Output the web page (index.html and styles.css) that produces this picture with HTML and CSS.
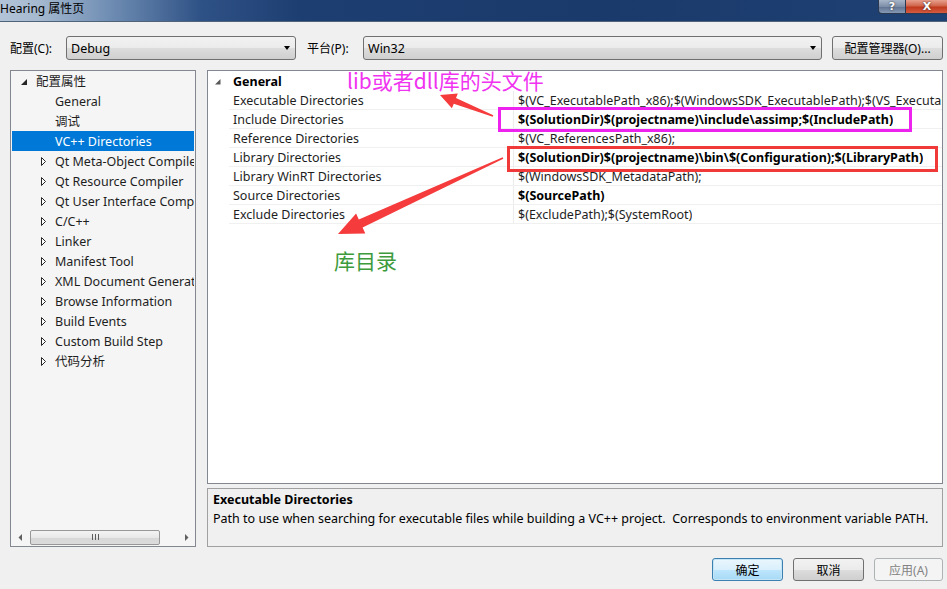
FILE: index.html
```html
<!DOCTYPE html>
<html lang="zh-CN">
<head>
<meta charset="utf-8">
<title>Hearing 属性页</title>
<link rel="stylesheet" href="styles.css">
</head>
<body>
<div class="window">
  <div class="titlebar">
    <span class="title">Hearing 属性页</span>
    <div class="caption">
      <div class="cap-btn help">?</div>
      <div class="cap-btn close">X</div>
    </div>
  </div>
  <div class="content">
    <div class="config-row">
      <span class="lbl">配置(C):</span>
      <div class="combo combo-config"><span class="combo-text">Debug</span><i class="drop"></i></div>
      <span class="lbl lbl-plat">平台(P):</span>
      <div class="combo combo-plat"><span class="combo-text">Win32</span><i class="drop"></i></div>
      <div class="btn btn-mgr">配置管理器(O)...</div>
    </div>
    <div class="main">
      <div class="tree">
        <ul class="tree-list">
          <li class="node lvl0"><span class="twisty"><svg width="7" height="7" viewBox="0 0 7 7"><polygon points="6,0 6,6 0,6" fill="#262626"/></svg></span>配置属性</li>
          <li class="node lvl1"><span class="twisty"></span>General</li>
          <li class="node lvl1"><span class="twisty"></span>调试</li>
          <li class="node lvl1 selected"><span class="twisty"></span>VC++ Directories</li>
          <li class="node lvl1"><span class="twisty"><svg class="tri" width="6" height="9" viewBox="0 0 6 9"><polygon points="0.5,0.5 4.5,4.5 0.5,8.5" fill="#fff" stroke="#262626"/></svg></span>Qt Meta-Object Compiler</li>
          <li class="node lvl1"><span class="twisty"><svg class="tri" width="6" height="9" viewBox="0 0 6 9"><polygon points="0.5,0.5 4.5,4.5 0.5,8.5" fill="#fff" stroke="#262626"/></svg></span>Qt Resource Compiler</li>
          <li class="node lvl1"><span class="twisty"><svg class="tri" width="6" height="9" viewBox="0 0 6 9"><polygon points="0.5,0.5 4.5,4.5 0.5,8.5" fill="#fff" stroke="#262626"/></svg></span>Qt User Interface Compiler</li>
          <li class="node lvl1"><span class="twisty"><svg class="tri" width="6" height="9" viewBox="0 0 6 9"><polygon points="0.5,0.5 4.5,4.5 0.5,8.5" fill="#fff" stroke="#262626"/></svg></span>C/C++</li>
          <li class="node lvl1"><span class="twisty"><svg class="tri" width="6" height="9" viewBox="0 0 6 9"><polygon points="0.5,0.5 4.5,4.5 0.5,8.5" fill="#fff" stroke="#262626"/></svg></span>Linker</li>
          <li class="node lvl1"><span class="twisty"><svg class="tri" width="6" height="9" viewBox="0 0 6 9"><polygon points="0.5,0.5 4.5,4.5 0.5,8.5" fill="#fff" stroke="#262626"/></svg></span>Manifest Tool</li>
          <li class="node lvl1"><span class="twisty"><svg class="tri" width="6" height="9" viewBox="0 0 6 9"><polygon points="0.5,0.5 4.5,4.5 0.5,8.5" fill="#fff" stroke="#262626"/></svg></span>XML Document Generator</li>
          <li class="node lvl1"><span class="twisty"><svg class="tri" width="6" height="9" viewBox="0 0 6 9"><polygon points="0.5,0.5 4.5,4.5 0.5,8.5" fill="#fff" stroke="#262626"/></svg></span>Browse Information</li>
          <li class="node lvl1"><span class="twisty"><svg class="tri" width="6" height="9" viewBox="0 0 6 9"><polygon points="0.5,0.5 4.5,4.5 0.5,8.5" fill="#fff" stroke="#262626"/></svg></span>Build Events</li>
          <li class="node lvl1"><span class="twisty"><svg class="tri" width="6" height="9" viewBox="0 0 6 9"><polygon points="0.5,0.5 4.5,4.5 0.5,8.5" fill="#fff" stroke="#262626"/></svg></span>Custom Build Step</li>
          <li class="node lvl1"><span class="twisty"><svg class="tri" width="6" height="9" viewBox="0 0 6 9"><polygon points="0.5,0.5 4.5,4.5 0.5,8.5" fill="#fff" stroke="#262626"/></svg></span>代码分析</li>
        </ul>
        <div class="hscroll">
          <span class="sb-arrow"><svg width="4" height="7" viewBox="0 0 4 7"><polygon points="4,0 4,7 0.5,3.5" fill="#606060"/></svg></span>
          <div class="sb-track">
            <div class="sb-thumb"><span class="grip"></span><span class="grip"></span><span class="grip"></span></div>
          </div>
          <span class="sb-arrow"><svg width="4" height="7" viewBox="0 0 4 7"><polygon points="0,0 0,7 3.5,3.5" fill="#606060"/></svg></span>
        </div>
      </div>
      <div class="right">
        <div class="grid">
          <div class="grid-cat"><span class="cat-twisty"><svg width="6" height="6" viewBox="0 0 6 6"><polygon points="5.5,0 5.5,5.5 0,5.5" fill="#595959"/></svg></span><b>General</b></div>
          <div class="grid-row"><div class="name">Executable Directories</div><div class="val">$(VC_ExecutablePath_x86);$(WindowsSDK_ExecutablePath);$(VS_ExecutablePath);$(MSBuild_ExecutablePath);$(SystemRoot)\SysWow64;$(FxCopDir);$(PATH);</div></div>
          <div class="grid-row"><div class="name">Include Directories</div><div class="val bold">$(SolutionDir)$(projectname)\include\assimp;$(IncludePath)</div></div>
          <div class="grid-row"><div class="name">Reference Directories</div><div class="val">$(VC_ReferencesPath_x86);</div></div>
          <div class="grid-row"><div class="name">Library Directories</div><div class="val bold">$(SolutionDir)$(projectname)\bin\$(Configuration);$(LibraryPath)</div></div>
          <div class="grid-row"><div class="name">Library WinRT Directories</div><div class="val">$(WindowsSDK_MetadataPath);</div></div>
          <div class="grid-row"><div class="name">Source Directories</div><div class="val bold">$(SourcePath)</div></div>
          <div class="grid-row"><div class="name">Exclude Directories</div><div class="val">$(ExcludePath);$(SystemRoot)</div></div>
        </div>
        <div class="desc">
          <div class="desc-title">Executable Directories</div>
          <div class="desc-text">Path to use when searching for executable files while building a VC++ project.&nbsp; Corresponds to environment variable PATH.</div>
        </div>
      </div>
    </div>
    <div class="footer">
      <div class="btn btn-dlg btn-default">确定</div>
      <div class="btn btn-dlg">取消</div>
      <div class="btn btn-dlg btn-disabled">应用(A)</div>
    </div>
  </div>

  <div class="note note-lib">lib或者dll库的头文件</div>
  <div class="note note-dir">库目录</div>
  <div class="hl hl-include"></div>
  <div class="hl hl-lib"></div>
  <svg class="arrows" width="947" height="589" viewBox="0 0 947 589">
    <polygon points="440,95 457.8,93.5 456,98.1 493.3,115.3 492.7,116.7 453.8,103.7 451.9,108.3" fill="#f53b3b"/>
    <polygon points="338,234 365.3,233.5 362.6,227.6 503.3,158.7 502.7,157.3 358.8,219.5 356.1,213.6" fill="#f53b3b"/>
  </svg>
</div>
</body>
</html>
```
FILE: styles.css
```css
* { box-sizing: border-box; }
html, body { margin: 0; padding: 0; }
body {
  width: 947px;
  height: 589px;
  overflow: hidden;
  background: #f0f0f0;
  font-family: "Segoe UI", "Noto Sans", "Noto Sans CJK SC", sans-serif;
  font-size: 12.5px;
  color: #000;
}
.window { position: relative; width: 947px; height: 589px; overflow: hidden; }

/* title bar */
.titlebar {
  height: 22px;
  border-bottom: 1px solid #4f6379;
  background: linear-gradient(to right, #b3c4d8 0px, #a4b8cf 40px, #6f8db3 110px, #2f5286 200px, #1d3e71 300px, #1a3a6b 600px, #1e4173 100%);
  display: flex;
  justify-content: space-between;
  align-items: flex-start;
}
.title { font-size: 12px; line-height: 18px; color: #000; }
.caption { display: flex; margin-right: -2px; }
.cap-btn {
  height: 14px;
  color: #fff;
  font-weight: bold;
  font-size: 11px;
  line-height: 13px;
  text-align: center;
  border: 1px solid #2a3950;
  border-top: none;
  font-family: "DejaVu Sans", sans-serif;
  text-shadow: 0 0 2px #222;
}
.help {
  width: 28px;
  border-bottom-left-radius: 4px;
  background: linear-gradient(#a8b6c9, #7d8ea8 50%, #5f7290 51%, #8599b5);
}
.close {
  width: 43px;
  border-left: none;
  background: linear-gradient(#e8a08e, #d0654b 45%, #c0391d 55%, #d65b40);
}

/* content */
.content { padding: 14px 4px 0 10px; }
.config-row { display: flex; align-items: center; height: 24px; font-size: 12px; }
.lbl { width: 56px; }
.lbl-plat { margin-left: 11px; }
.combo {
  height: 24px;
  border: 1px solid #707070;
  border-radius: 3px;
  background: linear-gradient(#f2f2f2 0%, #ebebeb 50%, #dddddd 51%, #cfcfcf 100%);
  display: flex;
  align-items: center;
  justify-content: space-between;
  padding: 0 4px 0 4px;
  font-size: 12.5px;
}
.combo-config { width: 230px; }
.combo-plat { width: 459px; }
.drop {
  width: 0; height: 0;
  border-left: 3.5px solid transparent;
  border-right: 3.5px solid transparent;
  border-top: 4px solid #000;
  margin-right: 1px;
}
.btn {
  display: flex;
  align-items: center;
  justify-content: center;
  border: 1px solid #707070;
  border-radius: 3px;
  background: linear-gradient(#f2f2f2 0%, #ebebeb 50%, #dddddd 51%, #cfcfcf 100%);
  color: #000;
}
.btn-mgr { width: 111px; height: 24px; margin-left: 10px; }

/* main area */
.main { display: flex; height: 477px; margin-top: 10px; }
.tree {
  width: 186px;
  border: 1px solid #828790;
  background: #f5f5f5;
  display: flex;
  flex-direction: column;
  margin-right: 11px;
}
.tree-list {
  list-style: none;
  margin: 0;
  padding: 0;
  flex: 1;
  overflow: hidden;
}
.node {
  height: 20px;
  padding-top: 2px;
  line-height: 18px;
  white-space: nowrap;
  display: flex;
  align-items: center;
  color: #1e1e1e;
  overflow: hidden;
  margin: 0 1px;
}
.lvl0 { padding-left: 6px; }
.lvl1 { padding-left: 25px; }
.twisty { width: 18px; flex: none; display: flex; align-items: center; }
.lvl0 .twisty svg { margin-left: 3px; }
.twisty .tri { margin-left: 4px; margin-top: -1px; }
.selected { background: #0078d7; color: #fff; }

.hscroll {
  height: 17px;
  display: flex;
  align-items: center;
  padding-bottom: 1px;
}
.sb-arrow { width: 17px; display: flex; justify-content: center; align-items: center; flex: none; }
.sb-track { flex: 1; height: 15px; }
.sb-thumb {
  width: 130px;
  margin-left: 2px;
  height: 15px;
  border: 1px solid #979797;
  border-radius: 2px;
  background: linear-gradient(#f3f3f3, #e8e8e8 50%, #d6d6d6 51%, #dcdcdc);
  display: flex;
  justify-content: center;
  align-items: center;
  gap: 2px;
}
.grip { width: 1px; height: 6px; background: #5b5b5b; }

.right { width: 736px; display: flex; flex-direction: column; }
.grid {
  height: 414px;
  border: 1px solid #828790;
  background: #fff;
  overflow: hidden;
}
.grid-cat {
  height: 20px;
  display: flex;
  align-items: center;
  white-space: nowrap;
}
.cat-twisty { width: 25px; display: flex; padding-left: 7px; margin-top: 1px; }
.grid-row {
  height: 19px;
  margin-left: 21px;
  border-bottom: 1px solid #f0f0f0;
  display: flex;
  white-space: nowrap;
}
.name {
  width: 285px;
  flex: none;
  padding-left: 4px;
  line-height: 20px;
  border-right: 1px solid #ececec;
  color: #1e1e1e;
}
.val {
  padding-left: 4px;
  line-height: 20px;
  overflow: hidden;
  color: #1e1e1e;
}
.val.bold { font-weight: bold; color: #000; }

.desc {
  height: 59px;
  margin-top: 4px;
  border: 1px solid #a0a0a0;
  padding: 1px 5px 0;
  line-height: 19px;
}
.desc-title { font-weight: bold; }

.footer {
  display: flex;
  justify-content: flex-end;
  gap: 10px;
  margin-top: 11px;
  font-size: 12px;
}
.btn-dlg { width: 71px; height: 23px; }
.btn-default {
  border-color: #3c7fb1;
  background: linear-gradient(#eaf6fd 0%, #d9f0fc 50%, #bee6fd 51%, #a7d9f5 100%);
  box-shadow: inset 0 0 0 1px #c4e5f6;
}
.btn-disabled {
  width: 69px;
  border-color: #adb2b5;
  background: #f4f4f4;
  color: #838383;
}

/* annotations */
.note {
  position: absolute;
  font-family: "Noto Sans CJK SC", sans-serif;
  font-size: 21px;
  line-height: 24px;
  white-space: nowrap;
}
.note-lib { left: 347px; top: 68px; color: #f033f0; }
.note-dir { left: 334px; top: 248px; color: #3d9b3d; }
.hl { position: absolute; }
.hl-include { left: 498px; top: 107px; width: 414px; height: 25px; border: 3px solid #ee22ee; }
.hl-lib { left: 507px; top: 146px; width: 431px; height: 26px; border: 3px solid #f03a3a; }
.arrows { position: absolute; left: 0; top: 0; pointer-events: none; }
```
